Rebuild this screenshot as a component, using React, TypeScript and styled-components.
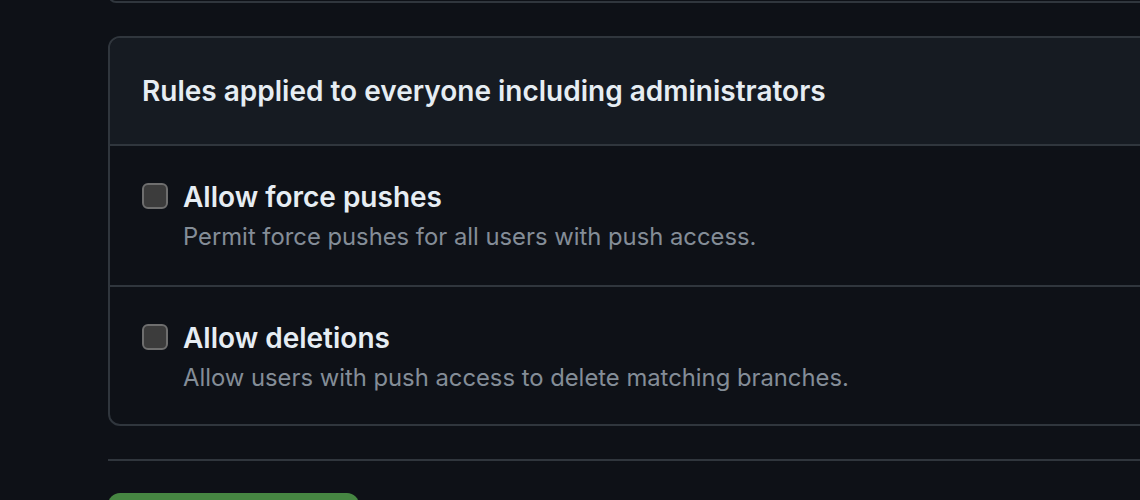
import React, { useState } from 'react';
import styled, { createGlobalStyle } from 'styled-components';

const GlobalStyle = createGlobalStyle`
  html, body {
    margin: 0;
    padding: 0;
    background: #0e1117;
    overflow: hidden;
  }
  body {
    font-family: Inter, "Noto Sans", "Liberation Sans", sans-serif;
    color: #e6edf3;
  }
`;

const rules = [
  {
    id: 'force',
    title: 'Allow force pushes',
    description: 'Permit force pushes for all users with push access.',
  },
  {
    id: 'delete',
    title: 'Allow deletions',
    description: 'Allow users with push access to delete matching branches.',
  },
];

const App = () => {
  const [checked, setChecked] = useState<Record<string, boolean>>({});

  return (
    <Div_Page>
      <GlobalStyle />
      <Div_PrevBox />
      <Section_Box>
        <Div_BoxHeader>
          <H3_Title>Rules applied to everyone including administrators</H3_Title>
        </Div_BoxHeader>
        {rules.map((rule) => (
          <Label_Row key={rule.id}>
            <Input_Check
              type="checkbox"
              checked={!!checked[rule.id]}
              onChange={() =>
                setChecked((prev) => ({ ...prev, [rule.id]: !prev[rule.id] }))
              }
            />
            <Div_Text>
              <Span_RuleTitle>{rule.title}</Span_RuleTitle>
              <P_Note>{rule.description}</P_Note>
            </Div_Text>
          </Label_Row>
        ))}
      </Section_Box>
      <Hr_Divider />
      <Button_Save type="button">Save changes</Button_Save>
    </Div_Page>
  );
};

export default App;

const Div_Page = styled.div`
  padding-left: 108px;
  width: 1200px;
  display: flex;
  flex-direction: column;
  align-items: flex-start;
`;

const Div_PrevBox = styled.div`
  align-self: stretch;
  box-sizing: border-box;
  height: 40px;
  margin-top: -37px;
  border: 2px solid #30363d;
  border-radius: 0 0 8px 8px;
`;

const Section_Box = styled.section`
  align-self: stretch;
  margin-top: 33px;
  border: 2px solid #30363d;
  border-radius: 12px;
  overflow: hidden;
`;

const Div_BoxHeader = styled.div`
  background: #161b22;
  height: 106px;
  padding: 0 32px;
  display: flex;
  align-items: center;
  border-bottom: 2px solid #30363d;
`;

const H3_Title = styled.h3`
  margin: 0;
  font-size: 28px;
  font-weight: 600;
  color: #e6edf3;
`;

const Label_Row = styled.label`
  display: flex;
  align-items: flex-start;
  gap: 15px;
  height: 139px;
  padding: 37px 32px 0;
  box-sizing: border-box;
  cursor: pointer;

  & + & {
    border-top: 2px solid #30363d;
  }
`;

const Input_Check = styled.input`
  appearance: none;
  width: 26px;
  height: 26px;
  margin: 0;
  flex: none;
  border: 2px solid #6e6e6e;
  border-radius: 6px;
  background: #3c3c3c;
  box-sizing: border-box;
  cursor: pointer;

  &:checked {
    background: #1f6feb;
    border-color: #1f6feb;
  }
`;

const Div_Text = styled.div`
  display: flex;
  flex-direction: column;
  gap: 8px;
`;

const Span_RuleTitle = styled.span`
  font-size: 28px;
  font-weight: 600;
  line-height: 28px;
  color: #e6edf3;
`;

const P_Note = styled.p`
  margin: 0;
  font-size: 23.8px;
  line-height: 36px;
  color: #848d97;
`;

const Hr_Divider = styled.hr`
  align-self: stretch;
  margin: 33px 0 0;
  border: 0;
  border-top: 2px solid #30363d;
`;

const Button_Save = styled.button`
  margin-top: 32px;
  width: 251px;
  height: 64px;
  border: 0;
  border-radius: 12px;
  background: #468642;
  color: #ffffff;
  font-family: inherit;
  font-size: 28px;
  font-weight: 600;
`;
